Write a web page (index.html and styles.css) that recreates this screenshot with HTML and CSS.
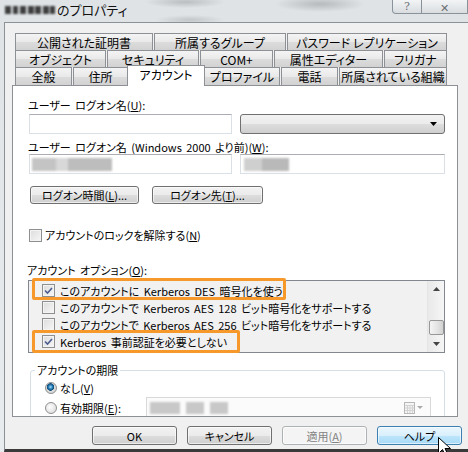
FILE: index.html
```html
<!DOCTYPE html>
<html lang="ja">
<head>
<meta charset="UTF-8">
<meta name="viewport" content="width=device-width, initial-scale=1.0">
<title>プロパティ</title>
<link rel="stylesheet" href="styles.css">
</head>
<body>

<div class="titlebar">
	<div class="title"><span class="redact title-name"></span>のプロパティ</div>
	<div class="caption">
		<span class="cap-btn cap-help">?</span>
		<span class="cap-btn cap-close">✕</span>
	</div>
</div>

<div class="frame">
	<div class="tabs">
		<div class="tab-row row1">
			<span class="tab">公開された証明書</span>
			<span class="tab">所属するグループ</span>
			<span class="tab">パスワード レプリケーション</span>
		</div>
		<div class="tab-row row2">
			<span class="tab">オブジェクト</span>
			<span class="tab">セキュリティ</span>
			<span class="tab">COM+</span>
			<span class="tab">属性エディター</span>
			<span class="tab">フリガナ</span>
		</div>
		<div class="tab-row row3">
			<span class="tab">全般</span>
			<span class="tab">住所</span>
			<span class="tab selected">アカウント</span>
			<span class="tab">プロファイル</span>
			<span class="tab">電話</span>
			<span class="tab">所属されている組織</span>
		</div>
	</div>

	<div class="panel">
		<div class="field-label first">ユーザー ログオン名(<u>U</u>):</div>
		<div class="input-row logon-row">
			<div class="textbox"></div>
			<div class="combo">
				<svg width="7" height="4" viewBox="0 0 7 4"><path d="M0 0h7L3.5 4z" fill="#000"/></svg>
			</div>
		</div>

		<div class="field-label second">ユーザー ログオン名 (Windows 2000 より前)(<u>W</u>):</div>
		<div class="input-row">
			<div class="textbox"><span class="redact gray-long"></span></div>
			<div class="textbox wide"><span class="redact gray-short"></span></div>
		</div>

		<div class="button-row">
			<span class="btn logon-hours"><span>ログオン時間(<u>L</u>)...</span></span>
			<span class="btn logon-to"><span>ログオン先(<u>T</u>)...</span></span>
		</div>

		<label class="check-row unlock">
			<span class="check"></span>
			<span>アカウントのロックを解除する(<u>N</u>)</span>
		</label>

		<div class="field-label options">アカウント オプション(<u>O</u>):</div>
		<div class="listbox">
			<div class="list-items">
				<div class="list-item">
					<span class="check"><svg width="11" height="11" viewBox="0 0 11 11"><path d="M2 5.5l2.5 2.5 4.5-5" fill="none" stroke="#4b5d8f" stroke-width="1.6"/></svg></span>
					<span>このアカウントに Kerberos DES 暗号化を使う</span>
				</div>
				<div class="list-item">
					<span class="check"></span>
					<span>このアカウントで Kerberos AES 128 ビット暗号化をサポートする</span>
				</div>
				<div class="list-item">
					<span class="check"></span>
					<span>このアカウントで Kerberos AES 256 ビット暗号化をサポートする</span>
				</div>
				<div class="list-item">
					<span class="check"><svg width="11" height="11" viewBox="0 0 11 11"><path d="M2 5.5l2.5 2.5 4.5-5" fill="none" stroke="#4b5d8f" stroke-width="1.6"/></svg></span>
					<span>Kerberos 事前認証を必要としない</span>
				</div>
			</div>
			<div class="scrollbar">
				<span class="scroll-arrow"><svg width="7" height="4" viewBox="0 0 7 4"><path d="M0 4h7L3.5 0z" fill="#444"/></svg></span>
				<span class="thumb"></span>
				<span class="scroll-arrow down"><svg width="7" height="4" viewBox="0 0 7 4"><path d="M0 0h7L3.5 4z" fill="#444"/></svg></span>
			</div>
			<span class="mark mark-des"></span>
			<span class="mark mark-preauth"></span>
		</div>

		<fieldset class="expiry">
			<legend>アカウントの期限</legend>
			<div class="expiry-body">
				<label class="radio-row">
					<span class="radio checked"></span>
					<span>なし(<u>V</u>)</span>
				</label>
				<div class="radio-row date-row">
					<span class="radio"></span>
					<span class="date-label">有効期限(<u>E</u>):</span>
					<div class="datepicker">
						<span class="redact date-y"></span>
						<span class="redact date-m"></span>
						<span class="redact date-d"></span>
						<svg class="cal" width="20" height="12" viewBox="0 0 20 12">
							<rect x="0.5" y="0.5" width="10" height="11" fill="#f4f4f4" stroke="#b8b8b8"/>
							<path d="M1 3.5h9M3.5 4v7M6 4v7M8.5 4v7M1 6h9M1 8.5h9" stroke="#d2d2d2"/>
							<path d="M13 4h6l-3 3z" fill="#a9a9a9"/>
						</svg>
					</div>
				</div>
			</div>
		</fieldset>
	</div>

	<div class="dialog-buttons">
		<span class="btn">OK</span>
		<span class="btn">キャンセル</span>
		<span class="btn disabled"><span>適用(<u>A</u>)</span></span>
		<span class="btn hot">ヘルプ</span>
	</div>
</div>

<svg class="cursor" width="13" height="20" viewBox="0 0 13 20">
	<path d="M0.5 0.5v16l4-4 3 6.5 2.5-1.2-3-6.3h5.5z" fill="#fff" stroke="#000"/>
</svg>

</body>
</html>
```

FILE: styles.css
```css
* {
	box-sizing: border-box;
	margin: 0;
	padding: 0;
}
body {
	position: relative;
	width: 468px;
	height: 452px;
	overflow: hidden;
	font-family: "Noto Sans CJK JP", sans-serif;
	font-size: 12px;
	font-feature-settings: "palt";
	color: #000;
	background:
		radial-gradient(ellipse 40px 6px at 185px 2px, rgba(120, 120, 120, 0.35), transparent),
		radial-gradient(ellipse 45px 8px at 320px 4px, rgba(110, 110, 110, 0.35), transparent),
		radial-gradient(ellipse 35px 5px at 190px 20px, rgba(130, 130, 130, 0.3), transparent),
		linear-gradient(#dfe3e6, #e9ecee);
}
u {
	text-decoration-thickness: 1px;
	text-underline-offset: 1px;
}

/* title bar */
.titlebar {
	display: flex;
	align-items: flex-start;
	height: 22px;
}
.title {
	display: flex;
	align-items: center;
	padding: 2px 0 0 5px;
	line-height: 16px;
	font-size: 13px;
	color: #111;
}
.redact {
	display: inline-block;
	filter: blur(0.8px);
}
.title-name {
	width: 50px;
	height: 8px;
	margin-right: 2px;
	background: repeating-linear-gradient(90deg, #3e3e3e 0 6px, transparent 6px 7.5px);
}
.caption {
	display: flex;
	margin-left: auto;
}
.cap-btn {
	display: flex;
	align-items: center;
	justify-content: center;
	height: 14px;
	border: 1px solid #8b939a;
	border-top: none;
	background: linear-gradient(#f2f4f5, #d9dde0);
	color: #6b6f73;
	font-size: 11px;
	line-height: 12px;
}
.cap-help {
	width: 30px;
	border-bottom-left-radius: 4px;
	font-family: "DejaVu Serif", serif;
}
.cap-close {
	width: 46px;
	border-left: none;
}

/* dialog frame */
.frame {
	height: 430px;
	margin-left: 4px;
	border-left: 1px solid #8a9197;
	border-top: 1px solid #8a9197;
	border-bottom: 3px solid #3a3a3a;
	background-color: #f0f0f0;
}
.tabs {
	width: 432px;
	margin: 10px 0 0 10px;
}
.tab-row {
	display: grid;
	column-gap: 1px;
}
.row1 {
	grid-template-columns: 138px 132px 160px;
	height: 17px;
}
.row2 {
	grid-template-columns: 91px 92px 73px 109px 63px;
	height: 17px;
}
.row3 {
	grid-template-columns: 57px 55px 74px 76px 57px 108px;
	height: 18px;
}
.tab {
	display: flex;
	align-items: center;
	justify-content: center;
	border: 1px solid #8d9095;
	border-bottom: none;
	background: linear-gradient(#f4f4f4, #e9e9e9 50%, #dcdcdc 51%, #d2d2d2);
	line-height: 15px;
	white-space: nowrap;
}
.tab.selected {
	position: relative;
	z-index: 1;
	align-items: flex-start;
	margin: -2px -2px -1px;
	padding-top: 1px;
	background: #fff;
}

/* panel */
.panel {
	width: 446px;
	height: 332px;
	margin-left: 7px;
	padding-left: 15px;
	border: 1px solid #8d9095;
	background-color: #fff;
	font-size: 11px;
	word-spacing: 2px;
	overflow: hidden;
}
.field-label {
	line-height: 14px;
	white-space: nowrap;
}
.field-label.first {
	margin-top: 12px;
}
.field-label.second {
	margin-top: 7px;
	line-height: 13px;
}
.field-label.options {
	margin-top: 21px;
	margin-left: -1px;
}
.input-row {
	display: flex;
	gap: 8px;
	margin-left: 1px;
}
.logon-row {
	margin-top: 2px;
}
.textbox {
	display: flex;
	align-items: center;
	width: 203px;
	height: 20px;
	padding-left: 2px;
	border: 1px solid #dbdfe6;
	border-top-color: #abadb3;
	background-color: #fff;
}
.textbox.wide {
	width: 205px;
	padding-left: 3px;
}
.gray-long {
	width: 80px;
	height: 13px;
	background: linear-gradient(90deg, #c4c4c4 0 30%, #d8d8d8 30% 45%, #bdbdbd 45% 100%);
}
.gray-short {
	width: 45px;
	height: 13px;
	background: linear-gradient(90deg, #cfcfcf 0 40%, #b9b9b9 40% 100%);
}
.combo {
	display: flex;
	align-items: center;
	justify-content: flex-end;
	width: 205px;
	height: 20px;
	padding-right: 7px;
	border: 1px solid #707070;
	border-radius: 3px;
	background: linear-gradient(#f2f2f2, #ebebeb 50%, #dddddd 51%, #cfcfcf);
}

/* buttons */
.button-row {
	display: flex;
	gap: 13px;
	margin: 12px 0 0 2px;
}
.btn {
	display: flex;
	align-items: center;
	justify-content: center;
	height: 18px;
	border: 1px solid #707070;
	border-radius: 3px;
	background: linear-gradient(#f2f2f2, #ebebeb 50%, #dddddd 51%, #cfcfcf);
	line-height: 14px;
	white-space: nowrap;
	box-shadow: inset 0 0 0 1px rgba(255, 255, 255, 0.6);
}
.logon-hours {
	width: 109px;
}
.logon-to {
	width: 111px;
}

/* check boxes and radios */
.check-row {
	display: flex;
	align-items: center;
	gap: 3px;
	height: 14px;
	line-height: 14px;
}
.unlock {
	margin: 24px 0 0 1px;
}
.check {
	display: flex;
	align-items: center;
	justify-content: center;
	flex: none;
	width: 13px;
	height: 13px;
	border: 1px solid #8e8f8f;
	background: linear-gradient(135deg, #dcdcdc, #f7f7f7);
	box-shadow: inset 0 0 0 1px #f4f4f4;
}
.radio {
	flex: none;
	width: 12px;
	height: 12px;
	border: 1px solid #8e8f8f;
	border-radius: 50%;
	background: radial-gradient(circle at 40% 40%, #fdfdfd, #d6d6d6);
}
.radio.checked {
	background:
		radial-gradient(circle at 45% 40%, #a9e1ff 0, #2a7fb8 2px, #0d4a75 3.5px, transparent 4px),
		radial-gradient(circle, #e8e8e8, #cfcfcf);
}

/* account option list */
.listbox {
	position: relative;
	display: flex;
	width: 417px;
	height: 73px;
	margin-top: 3px;
	border: 1px solid #828790;
	background-color: #f1f1f1;
}
.list-items {
	flex: 1;
	padding: 1px 0 0 13px;
}
.list-item {
	display: flex;
	align-items: center;
	gap: 5px;
	height: 17px;
	white-space: nowrap;
}
.scrollbar {
	display: flex;
	flex-direction: column;
	align-items: center;
	width: 17px;
	border-left: 1px solid #e4e4e4;
	background: linear-gradient(90deg, #e9e9e9, #f6f6f6);
}
.scroll-arrow {
	display: flex;
	align-items: center;
	justify-content: center;
	height: 17px;
}
.scroll-arrow.down {
	margin-top: auto;
}
.thumb {
	width: 15px;
	height: 16px;
	margin-top: 22px;
	border: 1px solid #979797;
	border-radius: 2px;
	background: linear-gradient(90deg, #f4f4f4, #e2e2e2 60%, #d2d2d2);
}
.mark {
	position: absolute;
	left: 3px;
	border: 3px solid #f7982a;
	border-radius: 2px;
}
.mark-des {
	top: -3px;
	width: 254px;
	height: 22px;
}
.mark-preauth {
	top: 49px;
	width: 208px;
	height: 23px;
}

/* expiry group */
.expiry {
	width: 415px;
	height: 80px;
	margin: 10px 0 0 2px;
	border: 1px solid #d5dfe5;
	border-radius: 3px;
}
.expiry legend {
	margin-left: 4px;
	padding: 0 2px;
	line-height: 14px;
}
.expiry-body {
	padding: 4px 0 0 14px;
}
.radio-row {
	display: flex;
	align-items: center;
	gap: 3px;
	height: 14px;
	line-height: 14px;
}
.date-row {
	height: 22px;
	margin-top: 2px;
}
.date-label {
	width: 83px;
}
.datepicker {
	display: flex;
	align-items: center;
	gap: 6px;
	width: 285px;
	height: 22px;
	padding-left: 3px;
	border: 1px solid #d9d9d9;
	background-color: #fbfbfb;
}
.datepicker .redact {
	height: 12px;
	background: #c8c8c8;
}
.date-y {
	width: 30px;
}
.date-m {
	width: 18px;
}
.date-d {
	width: 18px;
}
.cal {
	margin-left: auto;
	margin-right: 6px;
}

/* bottom buttons */
.dialog-buttons {
	display: flex;
	gap: 10px;
	margin: 9px 0 0 87px;
	font-size: 11px;
}
.dialog-buttons .btn {
	width: 85px;
	height: 19px;
}
.btn.disabled {
	border-color: #adb2b5;
	background: #f4f4f4;
	color: #838383;
}
.btn.hot {
	border-color: #3c7fb1;
	background: linear-gradient(#eaf6fd, #d9f0fc 50%, #bee6fd 51%, #a7d9f5);
}

.cursor {
	position: absolute;
	left: 438px;
	top: 437px;
}
```
